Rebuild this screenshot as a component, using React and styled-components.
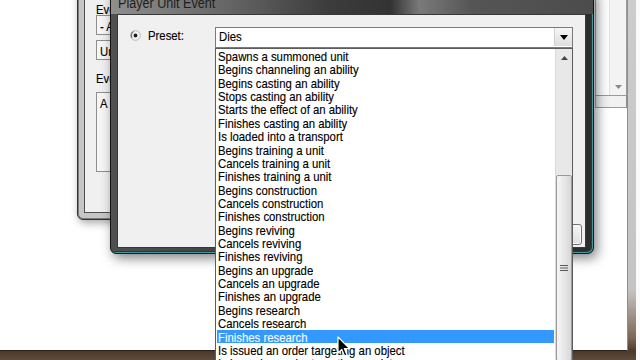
import styled, { createGlobalStyle, css } from "styled-components";

const events = [
  "Spawns a summoned unit",
  "Begins channeling an ability",
  "Begins casting an ability",
  "Stops casting an ability",
  "Starts the effect of an ability",
  "Finishes casting an ability",
  "Is loaded into a transport",
  "Begins training a unit",
  "Cancels training a unit",
  "Finishes training a unit",
  "Begins construction",
  "Cancels construction",
  "Finishes construction",
  "Begins reviving",
  "Cancels reviving",
  "Finishes reviving",
  "Begins an upgrade",
  "Cancels an upgrade",
  "Finishes an upgrade",
  "Begins research",
  "Cancels research",
  "Finishes research",
  "Is issued an order targeting an object",
  "Is issued an order targeting a point",
];

const SELECTED = 21;

const GlobalStyle = createGlobalStyle`
  html, body {
    margin: 0;
    padding: 0;
  }
  body {
    width: 640px;
    height: 360px;
    overflow: hidden;
    background: #fff;
    font-family: "Liberation Sans", Arial, sans-serif;
  }
`;

// the old video squeezes text sideways, so glyphs are narrowed
const narrow = css`
  display: inline-block;
  white-space: nowrap;
  transform: scaleX(0.84);
  transform-origin: 0 50%;
`;

const Txt = styled.span`
  ${narrow}
  font-size: 13.5px;
  color: #000;
  -webkit-text-stroke: 0.15px currentColor;
`;

const Desktop = styled.div`
  position: relative;
  width: 640px;
  height: 360px;
  overflow: hidden;
  background: #fafafa;
`;

/* ---------- editor window far behind ---------- */

const EditorWindow = styled.div`
  position: absolute;
  left: -20px;
  top: -30px;
  width: 656px;
  height: 390px;
  box-sizing: border-box;
  display: flex;
  background: linear-gradient(
    to bottom,
    #cdcdcd 0,
    #c4c4c4 calc(100% - 70px),
    #7c6655 calc(100% - 22px),
    #4a392c calc(100% - 9px),
    #5f4b3c 100%
  );
`;

const EditorBody = styled.div`
  flex: 1;
  display: flex;
  margin: 0 8px 9px 0;
  background: #fff;
  border-right: 1px solid #8d8d8d;
  border-bottom: 1px solid #2b221a;
`;

const EditorMain = styled.div`
  flex: 1;
`;

const SidePanel = styled.div`
  width: 32px;
  display: flex;
  flex-direction: column;
`;

const SideList = styled.div`
  height: 125px;
  box-sizing: border-box;
  display: flex;
  justify-content: flex-end;
  border-left: 1px solid #a8a8a8;
  background: #fdfdfd;
`;

const SideScroll = styled.div`
  width: 16px;
  display: flex;
  flex-direction: column;
  justify-content: flex-end;
  align-items: center;
  background: #f3f3f3;
  border-left: 1px solid #e2e2e2;
  border-right: 1px solid #9c9c9c;
  padding-bottom: 6px;
`;

const SideBar = styled.div`
  height: 13px;
  box-sizing: border-box;
  background: #f1f1f1;
  border-top: 1px solid #9a9a9a;
  border-bottom: 1px solid #9a9a9a;
  border-left: 1px solid #a8a8a8;
  border-right: 1px solid #8c8c8c;
`;

/* ---------- event dialog in the middle ---------- */

const EventWindow = styled.div`
  position: absolute;
  left: 77px;
  top: -30px;
  width: 505px;
  height: 250px;
  box-sizing: border-box;
  display: flex;
  padding: 0 6px 6px 6px;
  border: 1px solid #333;
  border-radius: 0 0 6px 6px;
  background: #c6c6c6;
  box-shadow: inset 1px 0 0 #7c7c7c, inset 0 -1px 0 #7c7c7c,
    2px 3px 8px rgba(0, 0, 0, 0.35);
`;

const EventClient = styled.div`
  flex: 1;
  display: flex;
  flex-direction: column;
  align-items: flex-start;
  padding: 31px 0 0 11px;
  background: #f0f0f0;
  border: 1px solid #4e4e4e;
`;

const FieldLabel = styled.div`
  line-height: 12px;
  height: 12px;
  margin-top: ${(p) => p.$top || 0}px;
`;

const FieldBox = styled.div`
  width: 380px;
  height: ${(p) => p.$h}px;
  box-sizing: border-box;
  margin-top: ${(p) => p.$top || 0}px;
  padding: 2px 0 0 3px;
  line-height: 15px;
  border: 1px solid #8e8e8e;
  background: #f6f6f6;
`;

/* ---------- Player Unit Event dialog ---------- */

const Dialog = styled.div`
  position: absolute;
  left: 110px;
  top: -12px;
  width: 484px;
  height: 266px;
  box-sizing: border-box;
  display: flex;
  flex-direction: column;
  padding-bottom: 5px;
  border: 1px solid #141414;
  border-radius: 6px;
  background: linear-gradient(to right, #505050, #3a3a3a 40%, #2c2c2c);
  box-shadow: inset -1px -1px 0 #3f98a2, inset -2px -2px 0 #1c3c40,
    3px 4px 12px rgba(0, 0, 0, 0.5);
`;

const TitleBar = styled.div`
  height: 25px;
  flex: none;
  box-sizing: border-box;
  padding: 5px 0 0 7px;
  border-radius: 6px 6px 0 0;
  background: linear-gradient(
    to right,
    #8e8e8e 0%,
    #6a6a6a 22%,
    #3c3c3c 45%,
    #333 58%,
    #7a7a7a 64%,
    #555 75%,
    #4c4c4c 100%
  );
`;

const TitleText = styled.span`
  display: inline-block;
  white-space: nowrap;
  font-size: 14px;
  line-height: 16px;
  color: #1c1c1c;
  transform: scaleX(0.9);
  transform-origin: 0 50%;
`;

const Client = styled.div`
  flex: 1;
  display: flex;
  flex-direction: column;
  margin: 0 7px 0 6px;
  padding: 12px 3px 2px 12px;
  background: #f0f0f0;
  border: 1px solid #383838;
`;

const PresetRow = styled.div`
  display: flex;
  align-items: flex-start;
`;

const RadioBox = styled.svg`
  width: 11px;
  height: 11px;
  margin-top: 3px;
  flex: none;
`;

const PresetLabel = styled.div`
  width: 67px;
  margin: 0 0 0 7px;
  line-height: 16px;
`;

const Combo = styled.div`
  position: relative;
  width: 358px;
  height: 21px;
  box-sizing: border-box;
  display: flex;
  border: 1px solid #7b7b7b;
  background: #fff;
`;

const ComboValue = styled.div`
  flex: 1;
  padding-left: 3px;
  line-height: 16px;
`;

const ComboButton = styled.div`
  width: 17px;
  margin: 0 0 1px 0;
  display: flex;
  align-items: center;
  justify-content: center;
  background: linear-gradient(to bottom, #f6f6f6, #dedede);
  border-left: 1px solid #d0d0d0;
`;

const DropList = styled.div`
  position: absolute;
  left: -1px;
  top: 20px;
  width: 358px;
  height: 320px;
  box-sizing: border-box;
  display: flex;
  border: 1px solid #5c5c5c;
  background: #fff;
  z-index: 5;
`;

const Items = styled.div`
  flex: 1;
  display: flex;
  flex-direction: column;
`;

const Item = styled.div`
  height: 13.36px;
  line-height: 13.36px;
  margin: 0 1px;
  padding-left: 1px;
  background: ${(p) => (p.$selected ? "#3399ff" : "transparent")};

  span {
    color: ${(p) => (p.$selected ? "#f4f9ff" : "#000")};
  }
`;

const ScrollBar = styled.div`
  width: 16px;
  display: flex;
  flex-direction: column;
  background: #e8e8e8;
  border-left: 1px solid #d9d9d9;
`;

const ScrollUp = styled.div`
  height: 17px;
  flex: none;
  display: flex;
  align-items: center;
  justify-content: center;
`;

const Thumb = styled.div`
  height: 186px;
  flex: none;
  margin-top: 109px;
  box-sizing: border-box;
  display: flex;
  align-items: center;
  justify-content: center;
  border: 1px solid #9a9a9a;
  border-radius: 2px;
  background: linear-gradient(to right, #f6f6f6, #e4e4e4 60%, #d8d8d8);
`;

const ButtonRow = styled.div`
  margin-top: auto;
  display: flex;
  justify-content: flex-end;
`;

const DialogButton = styled.div`
  width: 80px;
  height: 21px;
  box-sizing: border-box;
  border: 1px solid #707070;
  border-radius: 3px;
  background: linear-gradient(to bottom, #f4f4f4, #e0e0e0);
  box-shadow: inset 0 0 0 1px #fcfcfc;
`;

const Cursor = styled.svg`
  position: absolute;
  left: 337px;
  top: 336px;
  width: 14px;
  height: 22px;
  z-index: 10;
`;

function Radio() {
  return (
    <RadioBox viewBox="0 0 11 11">
      <circle cx="5.5" cy="5.5" r="4.8" fill="#f4f4f4" stroke="#b4b4b4" strokeWidth="1" />
      <path d="M2 8 A4.8 4.8 0 0 1 3.5 1.4" fill="none" stroke="#6a6a6a" strokeWidth="1.2" />
      <circle cx="5.5" cy="5.5" r="1.9" fill="#1e1e1e" />
    </RadioBox>
  );
}

export default function App() {
  return (
    <>
      <GlobalStyle />
      <Desktop>
        <EditorWindow>
          <EditorBody>
            <EditorMain />
            <SidePanel>
              <SideList>
                <SideScroll>
                  <svg width="7" height="4" viewBox="0 0 7 4">
                    <path d="M0 0 H7 L3.5 4 Z" fill="#8a8a8a" />
                  </svg>
                </SideScroll>
              </SideList>
              <SideBar />
            </SidePanel>
          </EditorBody>
        </EditorWindow>

        <EventWindow>
          <EventClient>
            <FieldLabel>
              <Txt>Event</Txt>
            </FieldLabel>
            <FieldBox $h={20}>
              <Txt>- Any</Txt>
            </FieldBox>
            <FieldBox $h={20} $top={5}>
              <Txt>Unit</Txt>
            </FieldBox>
            <FieldLabel $top={12}>
              <Txt>Events</Txt>
            </FieldLabel>
            <FieldBox $h={80} $top={8}>
              <Txt>A unit</Txt>
            </FieldBox>
          </EventClient>
        </EventWindow>

        <Dialog>
          <TitleBar>
            <TitleText>Player Unit Event</TitleText>
          </TitleBar>
          <Client>
            <PresetRow>
              <Radio />
              <PresetLabel>
                <Txt>Preset:</Txt>
              </PresetLabel>
              <Combo>
                <ComboValue>
                  <Txt>Dies</Txt>
                </ComboValue>
                <ComboButton>
                  <svg width="8" height="5" viewBox="0 0 8 5">
                    <path d="M0 0 H8 L4 5 Z" fill="#000" />
                  </svg>
                </ComboButton>
                <DropList>
                  <Items>
                    {events.map((e, i) => (
                      <Item key={e} $selected={i === SELECTED}>
                        <Txt>{e}</Txt>
                      </Item>
                    ))}
                  </Items>
                  <ScrollBar>
                    <ScrollUp>
                      <svg width="7" height="4" viewBox="0 0 7 4">
                        <path d="M0 4 H7 L3.5 0 Z" fill="#444" />
                      </svg>
                    </ScrollUp>
                    <Thumb>
                      <svg width="8" height="8" viewBox="0 0 8 8">
                        <path d="M0 1.5 H8 M0 4 H8 M0 6.5 H8" stroke="#5a5a5a" strokeWidth="1" />
                      </svg>
                    </Thumb>
                  </ScrollBar>
                </DropList>
              </Combo>
            </PresetRow>
            <ButtonRow>
              <DialogButton />
            </ButtonRow>
          </Client>
        </Dialog>

        <Cursor viewBox="0 0 14 22">
          <path
            d="M1 1 L1 17 L4.8 13.4 L7.6 20 L10 19 L7.3 12.6 L12.5 12.6 Z"
            fill="#000"
            stroke="#fff"
            strokeWidth="1.2"
            strokeLinejoin="round"
          />
        </Cursor>
      </Desktop>
    </>
  );
}
